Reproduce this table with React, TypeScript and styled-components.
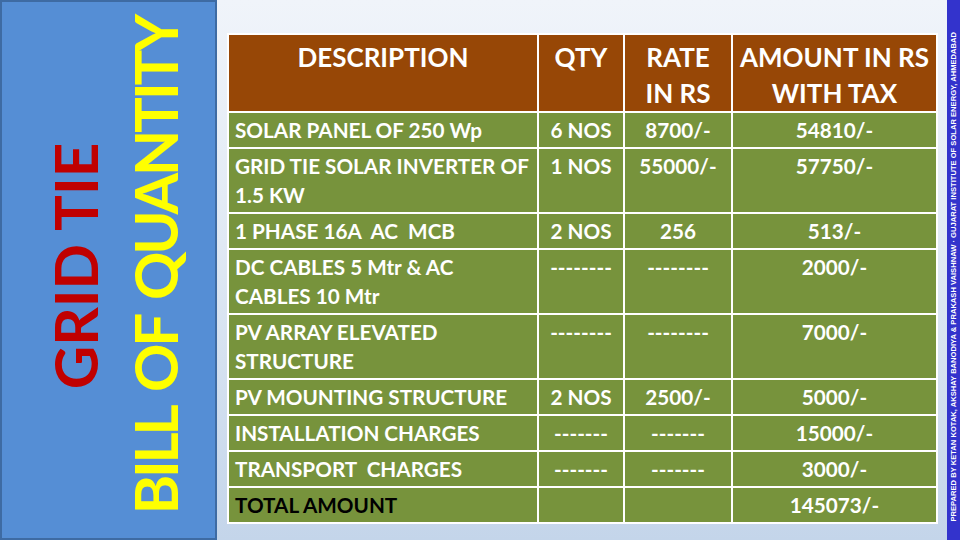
import React from "react";
import styled, { createGlobalStyle } from "styled-components";

const GlobalStyle = createGlobalStyle`
    html, body {
        margin: 0;
        padding: 0;
    }
    body {
        width: 960px;
        height: 540px;
        overflow: hidden;
        font-family: Lato, "Open Sans", sans-serif;
    }
`;

interface Item {
    desc: string[];
    qty: string;
    rate: string;
    amount: string;
    total?: boolean;
}

const items: Item[] = [
    { desc: ["SOLAR PANEL OF 250 Wp"], qty: "6 NOS", rate: "8700/-", amount: "54810/-" },
    { desc: ["GRID TIE SOLAR INVERTER OF", "1.5 KW"], qty: "1 NOS", rate: "55000/-", amount: "57750/-" },
    { desc: ["1 PHASE 16A\u00a0 AC\u00a0 MCB"], qty: "2 NOS", rate: "256", amount: "513/-" },
    { desc: ["DC CABLES 5 Mtr & AC", "CABLES 10 Mtr"], qty: "--------", rate: "--------", amount: "2000/-" },
    { desc: ["PV ARRAY ELEVATED", "STRUCTURE"], qty: "--------", rate: "--------", amount: "7000/-" },
    { desc: ["PV MOUNTING STRUCTURE"], qty: "2 NOS", rate: "2500/-", amount: "5000/-" },
    { desc: ["INSTALLATION CHARGES"], qty: "-------", rate: "-------", amount: "15000/-" },
    { desc: ["TRANSPORT\u00a0 CHARGES"], qty: "-------", rate: "-------", amount: "3000/-" },
    { desc: ["TOTAL AMOUNT"], qty: "", rate: "", amount: "145073/-", total: true },
];

export default function App() {
    return <Slide>
        <GlobalStyle />
        <TitlePanel>
            <TitleText>
                <RedLine>GRID TIE</RedLine>
                <YellowLine>BILL OF QUANTITY</YellowLine>
            </TitleText>
        </TitlePanel>

        <Main>
            <Table>
                <HeadCell>DESCRIPTION</HeadCell>
                <HeadCell>QTY</HeadCell>
                <HeadCell>RATE<br />IN RS</HeadCell>
                <HeadCell>AMOUNT IN RS<br />WITH TAX</HeadCell>
                {items.map((item, i) => (
                    <React.Fragment key={i}>
                        <DescCell $dark={item.total}>
                            {item.desc.map((line, j) => <div key={j}>{line}</div>)}
                        </DescCell>
                        <Cell>{item.qty}</Cell>
                        <Cell>{item.rate}</Cell>
                        <Cell>{item.amount}</Cell>
                    </React.Fragment>
                ))}
            </Table>
        </Main>

        <CreditStrip>
            <CreditText>
                PREPARED BY KETAN KOTAK, AKSHAY BANODIYA &amp; PRAKASH VAISHNAW · GUJARAT INSTITUTE OF SOLAR ENERGY, AHMEDABAD
            </CreditText>
        </CreditStrip>
    </Slide>;
}

const Slide = styled.div`
    display: flex;
    width: 960px;
    height: 540px;
    background: linear-gradient(180deg, #f0f4fa 0%, #e0e9f4 45%, #c4d5ea 100%);
`;

const TitlePanel = styled.div`
    box-sizing: border-box;
    width: 217px;
    height: 540px;
    flex-shrink: 0;
    background: #558ed5;
    border: 2px solid #3e6ba3;
    display: flex;
    align-items: center;
    justify-content: center;
    padding-left: 12px;
    padding-bottom: 8px;
`;

const TitleText = styled.div`
    writing-mode: vertical-rl;
    transform: rotate(180deg);
    font-weight: 700;
    font-size: 60px;
    line-height: 80px;
    text-align: center;
    white-space: nowrap;
`;

const RedLine = styled.div`
    color: #c00000;
`;

const YellowLine = styled.div`
    color: #ffff00;
    letter-spacing: -3.2px;
    word-spacing: 6px;
`;

const Main = styled.div`
    flex: 1;
    padding: 33px 9px 0 10px;
`;

const Table = styled.div`
    display: grid;
    grid-template-columns: 308px 84px 106px 203px;
    gap: 2px;
    padding: 2px;
    background: #ffffff;
    width: fit-content;
`;

const HeadCell = styled.div`
    background: #974706;
    color: #ffffff;
    font-weight: 700;
    font-size: 26px;
    line-height: 36px;
    height: 76px;
    box-sizing: border-box;
    padding-top: 4px;
    text-align: center;
    white-space: nowrap;
`;

const Cell = styled.div`
    background: #77933c;
    color: #ffffff;
    font-weight: 700;
    font-size: 20.7px;
    line-height: 29px;
    padding: 3px 2px 2px;
    text-align: center;
    white-space: nowrap;
`;

const DescCell = styled(Cell)<{ $dark?: boolean }>`
    text-align: left;
    padding-left: 6px;
    color: ${p => p.$dark ? "#000000" : "#ffffff"};
`;

const CreditStrip = styled.div`
    width: 13px;
    height: 540px;
    flex-shrink: 0;
    background: #3333cc;
    display: flex;
    align-items: flex-end;
    justify-content: center;
    overflow: hidden;
`;

const CreditText = styled.div`
    writing-mode: vertical-rl;
    transform: rotate(180deg);
    color: #ffffff;
    font-family: "Liberation Sans", Arial, sans-serif;
    font-weight: 700;
    font-size: 7.6px;
    line-height: 13px;
    white-space: nowrap;
    margin-bottom: 18px;
`;
